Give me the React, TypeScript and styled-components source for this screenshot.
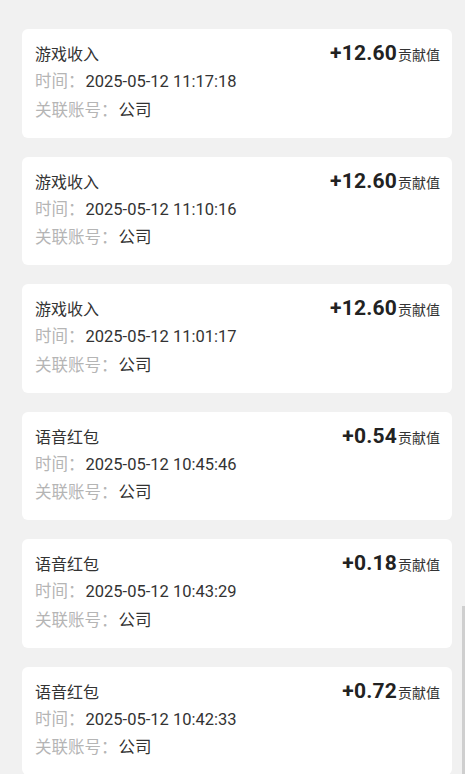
import React from "react";
import styled, { createGlobalStyle } from "styled-components";

const GlobalStyle = createGlobalStyle`
  html, body {
    margin: 0;
    padding: 0;
    background: #f1f1f1;
  }
  body {
    font-family: "Roboto", "Noto Sans CJK SC", sans-serif;
    overflow: hidden;
  }
`;

const Page = styled.div`
  width: 465px;
  height: 774px;
  box-sizing: border-box;
  padding: 29px 13px 0 22px;
  background: #f1f1f1;
  display: flex;
  flex-direction: column;
  gap: 19px;
  overflow: hidden;
  position: relative;
`;

const Card = styled.div`
  flex: none;
  background: #ffffff;
  border-radius: 6px;
  padding: 9px 12px 12.5px 13px;
  display: flex;
  flex-direction: column;
`;

const TopRow = styled.div`
  display: flex;
  justify-content: space-between;
  align-items: baseline;
  height: 30px;
  line-height: 30px;
`;

const Title = styled.span`
  font-size: 16px;
  color: #333333;
`;

const Amount = styled.span`
  display: flex;
  align-items: baseline;
`;

const Value = styled.span`
  font-size: 21px;
  font-weight: 700;
  color: #222222;
  letter-spacing: 0.2px;
`;

const Unit = styled.span`
  font-size: 14px;
  color: #333333;
  margin-left: 1px;
`;

const InfoRow = styled.div`
  height: 28.5px;
  line-height: 28.5px;
  font-size: 16.5px;
  display: flex;
  align-items: baseline;
`;

const Label = styled.span`
  color: #b5b5b5;
`;

const Text = styled.span`
  color: #333333;
  margin-left: 1px;
`;

const ScrollThumb = styled.div`
  position: absolute;
  right: 0;
  top: 606px;
  width: 3px;
  height: 180px;
  background: #cfcfcf;
`;

type Item = { title: string; amount: string; time: string };

const items: Item[] = [
  { title: "游戏收入", amount: "+12.60", time: "2025-05-12 11:17:18" },
  { title: "游戏收入", amount: "+12.60", time: "2025-05-12 11:10:16" },
  { title: "游戏收入", amount: "+12.60", time: "2025-05-12 11:01:17" },
  { title: "语音红包", amount: "+0.54", time: "2025-05-12 10:45:46" },
  { title: "语音红包", amount: "+0.18", time: "2025-05-12 10:43:29" },
  { title: "语音红包", amount: "+0.72", time: "2025-05-12 10:42:33" },
];

export default function App() {
  return (
    <>
      <GlobalStyle />
      <Page>
        {items.map((it, i) => (
          <Card key={i}>
            <TopRow>
              <Title>{it.title}</Title>
              <Amount>
                <Value>{it.amount}</Value>
                <Unit>贡献值</Unit>
              </Amount>
            </TopRow>
            <InfoRow>
              <Label>时间：</Label>
              <Text>{it.time}</Text>
            </InfoRow>
            <InfoRow>
              <Label>关联账号：</Label>
              <Text>公司</Text>
            </InfoRow>
          </Card>
        ))}
        <ScrollThumb />
      </Page>
    </>
  );
}
